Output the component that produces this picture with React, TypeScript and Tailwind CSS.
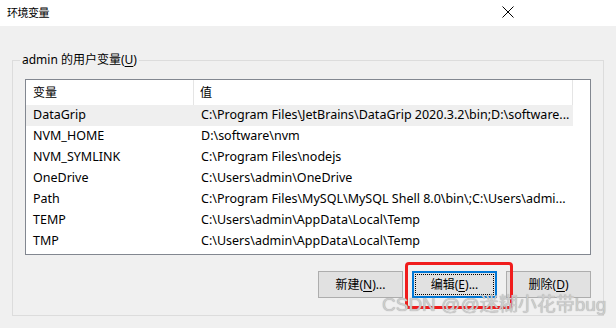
import React from 'react';

const rows: [string, string][] = [
  ['DataGrip', 'C:\\Program Files\\JetBrains\\DataGrip 2020.3.2\\bin;D:\\software...'],
  ['NVM_HOME', 'D:\\software\\nvm'],
  ['NVM_SYMLINK', 'C:\\Program Files\\nodejs'],
  ['OneDrive', 'C:\\Users\\admin\\OneDrive'],
  ['Path', 'C:\\Program Files\\MySQL\\MySQL Shell 8.0\\bin\\;C:\\Users\\admi...'],
  ['TEMP', 'C:\\Users\\admin\\AppData\\Local\\Temp'],
  ['TMP', 'C:\\Users\\admin\\AppData\\Local\\Temp'],
];

const font = { fontFamily: '"Noto Sans", "Noto Sans CJK SC", sans-serif' };

const Btn = ({ label, hot, dots, focused }: { label: string; hot: string; dots?: boolean; focused?: boolean }) => (
  <button
    className={
      focused
        ? 'w-[85px] h-[27px] bg-[#e1e1e1] border-2 border-[#0078d7] p-[1px] text-[12px] text-black'
        : 'w-[85px] h-[27px] bg-[#e1e1e1] border border-[#adadad] text-[12px] text-black'
    }
  >
    <span
      className={
        focused
          ? 'flex h-full w-full items-center justify-center border border-dotted border-black'
          : 'flex h-full w-full items-center justify-center'
      }
    >
      {label}(<span className="underline underline-offset-2">{hot}</span>){dots ? '...' : ''}
    </span>
  </button>
);

export default function App() {
  return (
    <div className="relative w-[616px] h-[328px] bg-[#f0f0f0] overflow-hidden text-black" style={font}>
      <div className="h-[26px] bg-white flex items-center justify-between pl-[7px] pr-[100px]">
        <span className="text-[11px] tracking-[-0.5px]">环境变量</span>
        <svg width="12" height="12" viewBox="0 0 12 12" className="mt-[-2px] mr-[2px]">
          <path d="M0.5 0.5L11.5 11.5M11.5 0.5L0.5 11.5" stroke="#000" strokeWidth="1" />
        </svg>
      </div>

      <fieldset className="ml-[12px] mt-[26px] w-[592px] h-[264px] border border-[#dcdcdc] px-[12px] pt-[11px]">
        <legend className="ml-[-5px] px-[2px] text-[12px] leading-[16px]">
          admin 的用户变量(<span className="underline underline-offset-2">U</span>)
        </legend>

        <div className="h-[176px] bg-white border border-[#828790]">
          <div className="flex h-[25px] w-[547px] text-[12px]">
            <div className="w-[168px] pl-[7px] flex items-center border-r border-[#e5e5e5]">变量</div>
            <div className="flex-1 pl-[6px] flex items-center border-r border-[#e5e5e5]">值</div>
          </div>
          {rows.map(([name, value], i) => (
            <div
              key={name}
              className={
                i === 0
                  ? 'flex h-[21px] w-[547px] items-center text-[12.5px] bg-[#efefef]'
                  : 'flex h-[21px] w-[547px] items-center text-[12.5px]'
              }
            >
              <div className="w-[168px] pl-[7px] whitespace-nowrap">{name}</div>
              <div className="flex-1 min-w-0 pl-[7px] whitespace-nowrap">{value}</div>
            </div>
          ))}
        </div>

        <div className="flex justify-end gap-[9px] mt-[16px]">
          <Btn label="新建" hot="N" dots />
          <Btn label="编辑" hot="E" dots focused />
          <Btn label="删除" hot="D" />
        </div>
      </fieldset>

      <div className="absolute left-[405px] top-[262px] w-[108px] h-[47px] border-[3px] border-[#f01c1c] rounded-[4px]" />
      <div
        className="absolute left-[382px] top-[293px] text-[19px] leading-[24px] text-[#cdcdcd] whitespace-nowrap"
        style={{ fontFamily: '"Liberation Sans", "Noto Sans CJK SC", sans-serif', textShadow: '0 0 1px #9a9a9a' }}
      >
        CSDN @@迷糊小花带bug
      </div>
    </div>
  );
}
